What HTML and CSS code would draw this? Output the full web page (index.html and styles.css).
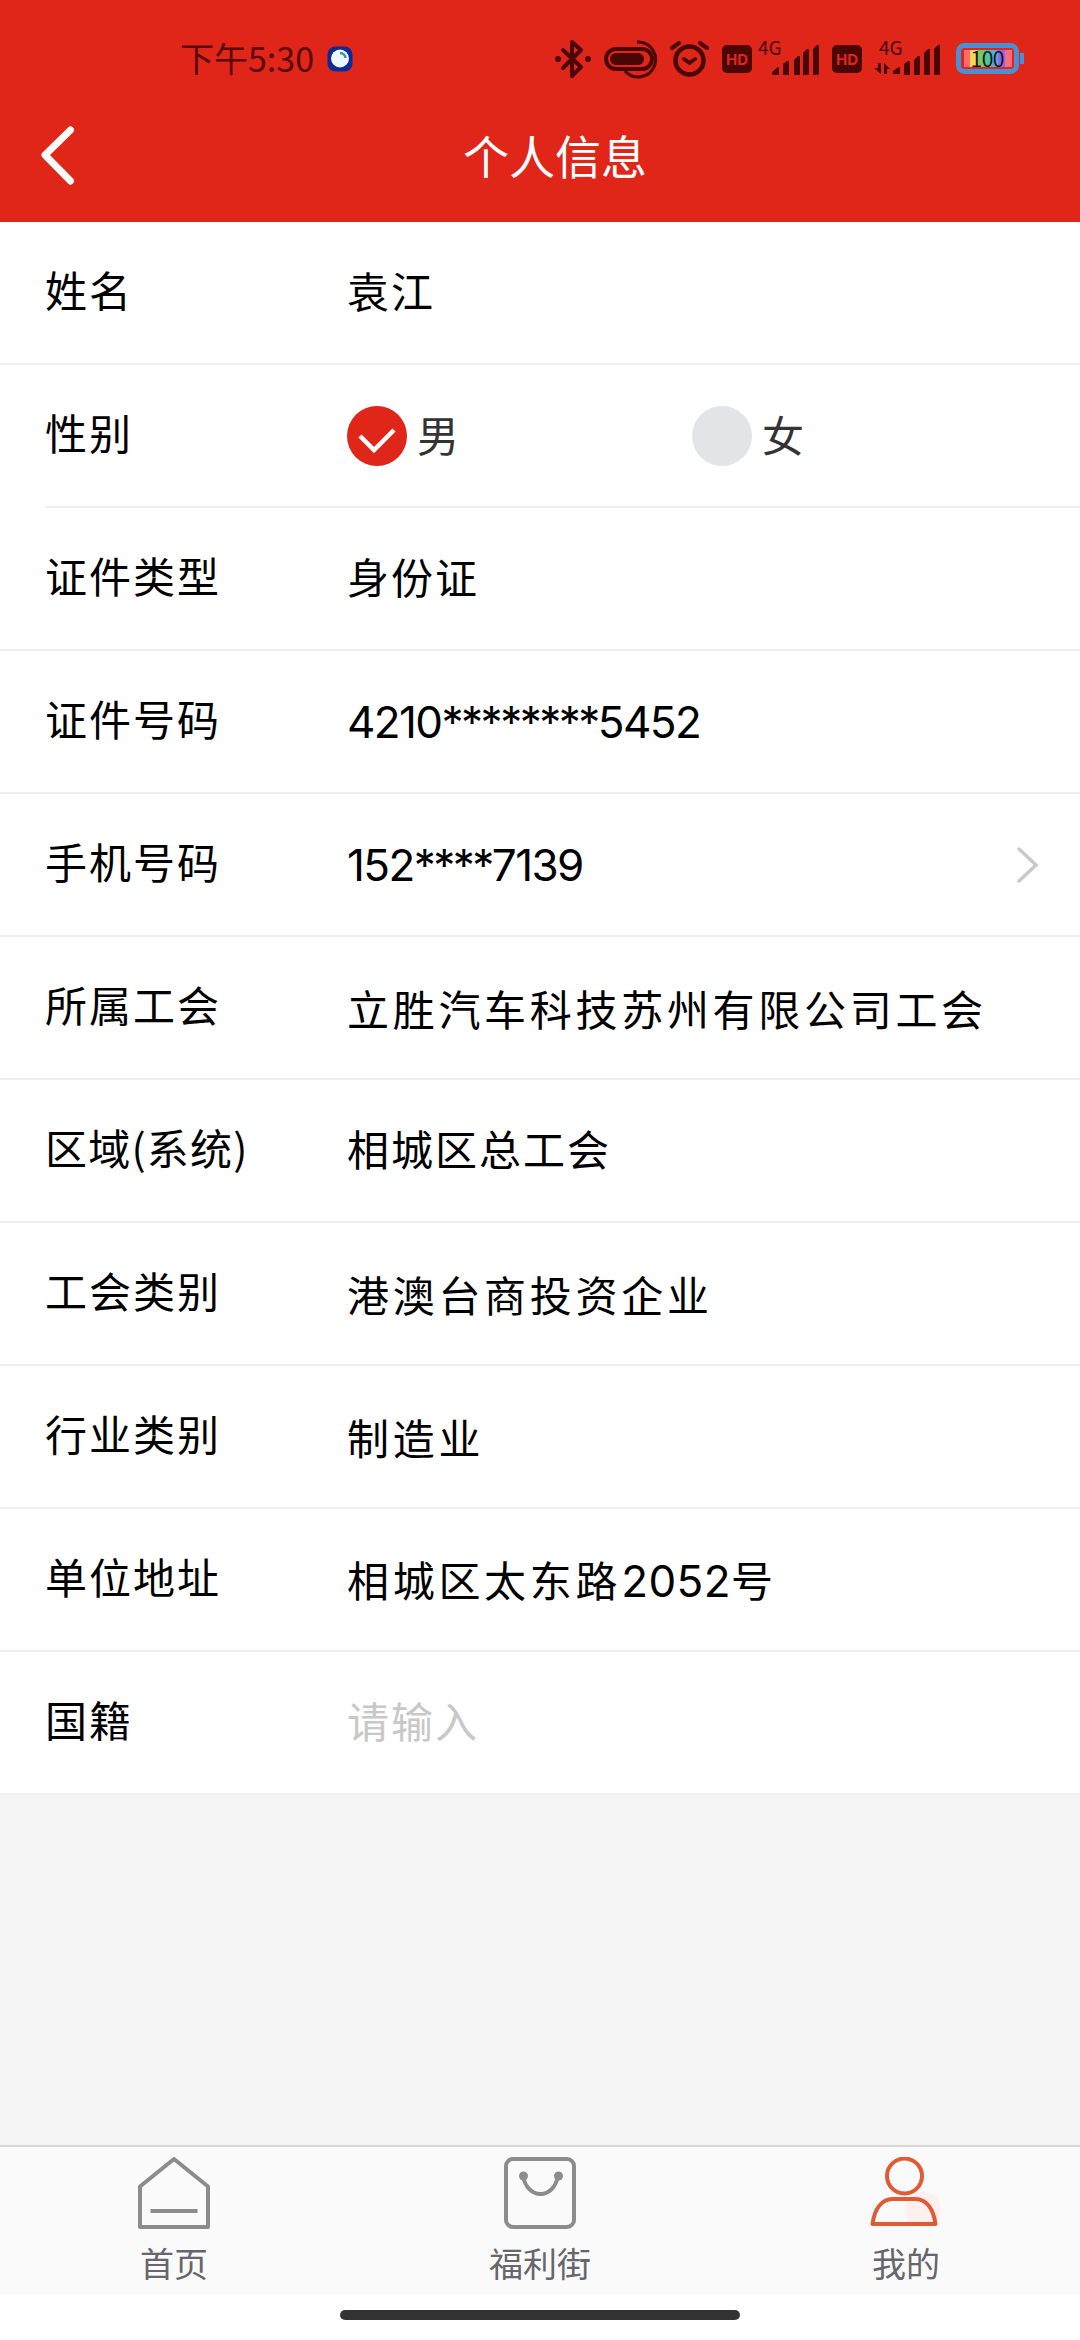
FILE: index.html
```html
<!DOCTYPE html>
<html lang="zh-CN">
  <head>
    <meta charset="UTF-8" />
    <meta name="viewport" content="width=device-width, initial-scale=1.0" />
    <title>个人信息</title>
    <link rel="stylesheet" href="styles.css">
  </head>
  <body>
    <header class="header">
      <div class="status-bar">
        <span class="time">下午5:30</span>
        <svg class="app-dot" width="26" height="26" viewBox="0 0 26 26">
          <rect x="0.5" y="0.5" width="25" height="25" rx="8" fill="#0d2a96" />
          <circle cx="13" cy="12.5" r="9" fill="#eef5fb" />
          <path d="M13 7a5.500 5.500 0 0 1 5.500 5" fill="none" stroke="#3d8fae" stroke-width="2.500" />
        </svg>
        <!-- bluetooth, vibrate, alarm, signal -->
        <svg class="status-icons" width="390" height="60" viewBox="550 29 390 60">
          <g fill="none" stroke="#4a0505" stroke-width="4" stroke-linecap="round" stroke-linejoin="round">
            <path d="M562 50l18 17-9 9V42l9 8-18 18" />
            <rect x="605" y="49" width="46" height="20" rx="10" stroke-width="4" />
            <path d="M636 42a17.500 17.500 0 1 1-12 29" stroke-width="3" stroke-linecap="butt" />
            <circle cx="688.500" cy="60.500" r="14" stroke-width="4.500" />
            <path d="M683 59l5.500 4 5.500-4" />
            <path d="M671 48l7-5M706 48l-7-5" />
          </g>
          <g fill="#4a0505">
            <circle cx="557" cy="59" r="3" />
            <circle cx="587" cy="59" r="3" />
            <rect x="609" y="53" width="34" height="12" rx="6" />
            <rect x="721" y="45" width="30" height="28" rx="5" />
            <rect x="831" y="45" width="30" height="28" rx="5" />
            <path d="M771 75v-3l6-5h1v8zM782 75V64l4-3h2v14zM793 75V60l4-4h2v19zM802 75V53l4-4h2v26zM812 75V49l4-4h2v30z" />
            <path d="M892 74v-3l6-4h1v7zM903 75V64l4-3h2v14zM913 75V60l4-4h2v19zM923 75V53l4-4h2v26zM933 75V49l4-4h2v30z" />
            <path d="M877 63h3v11l-7-6h4zM883 74V63l6 6h-3v5z" />
          </g>
          <g font-family="Inter, sans-serif" font-weight="700" font-size="15" fill="#e02619" text-anchor="middle">
            <text x="736" y="65">HD</text>
            <text x="846" y="65">HD</text>
          </g>
          <g font-family="Noto Sans CJK SC, sans-serif" font-size="19" fill="#4a0505">
            <text x="757" y="55">4G</text>
            <text x="878" y="55">4G</text>
          </g>
        </svg>
        <svg class="battery" width="70" height="32" viewBox="0 0 70 32">
          <rect x="8" y="7" width="7" height="17" fill="#ff6b66" />
          <rect x="14" y="7" width="7" height="17" fill="#ffd55c" />
          <rect x="21" y="7" width="7" height="17" fill="#79ca5c" />
          <rect x="28" y="7" width="7" height="17" fill="#49c8a0" />
          <rect x="35" y="7" width="7" height="17" fill="#4daee0" />
          <rect x="42" y="7" width="7" height="17" fill="#8d68ee" />
          <rect x="49" y="7" width="7" height="17" fill="#ff6b76" />
          <rect x="2.500" y="2.500" width="58" height="26" rx="6" fill="none" stroke="#4b90d6" stroke-width="5" />
          <rect x="64" y="10" width="4" height="11" fill="#4b90d6" />
          <text x="31.500" y="23.500" text-anchor="middle" font-family="Noto Sans CJK SC, sans-serif" font-size="21" fill="#1a1414" textLength="34">100</text>
        </svg>
      </div>
      <div class="nav-bar">
        <svg class="back" width="40" height="64" viewBox="0 0 40 64">
          <path d="M32.500 6L7 31l25.500 26" fill="none" stroke="#fff" stroke-width="7" stroke-linecap="round" stroke-linejoin="round" />
        </svg>
        <h1>个人信息</h1>
      </div>
    </header>

    <main class="form">
      <div class="row">
        <div class="label">姓名</div>
        <div class="value">袁江</div>
      </div>
      <div class="row inset">
        <div class="label">性别</div>
        <div class="radios">
          <div class="radio">
            <svg width="60" height="60" viewBox="0 0 60 60">
              <circle cx="30" cy="30" r="30" fill="#e02619" />
              <path d="M13 30l14 14 20-20" fill="none" stroke="#fff" stroke-width="4.500" />
            </svg>
            <span>男</span>
          </div>
          <div class="radio">
            <svg width="60" height="60" viewBox="0 0 60 60">
              <circle cx="30" cy="30" r="30" fill="#e3e4e5" />
            </svg>
            <span>女</span>
          </div>
        </div>
      </div>
      <div class="row">
        <div class="label">证件类型</div>
        <div class="value">身份证</div>
      </div>
      <div class="row">
        <div class="label">证件号码</div>
        <div class="value num">4210<span class="stars">********</span>5452</div>
      </div>
      <div class="row">
        <div class="label">手机号码</div>
        <div class="value num">152<span class="stars">****</span>7139</div>
        <svg class="arrow" width="24" height="38" viewBox="0 0 24 38">
          <path d="M3 3l17 16L3 35" fill="none" stroke="#c9c9c9" stroke-width="3.500" stroke-linecap="round" />
        </svg>
      </div>
      <div class="row">
        <div class="label">所属工会</div>
        <div class="value long">立胜汽车科技苏州有限公司工会</div>
      </div>
      <div class="row">
        <div class="label tight">区域(系统)</div>
        <div class="value">相城区总工会</div>
      </div>
      <div class="row">
        <div class="label">工会类别</div>
        <div class="value long">港澳台商投资企业</div>
      </div>
      <div class="row">
        <div class="label">行业类别</div>
        <div class="value long">制造业</div>
      </div>
      <div class="row">
        <div class="label">单位地址</div>
        <div class="value long">相城区太东路<span class="house-no">2052</span>号</div>
      </div>
      <div class="row">
        <div class="label">国籍</div>
        <div class="value placeholder">请输入</div>
      </div>
    </main>

    <nav class="tab-bar">
      <a class="tab">
        <svg width="72" height="72" viewBox="0 0 72 72" fill="none" stroke="#8c8c8c" stroke-width="4">
          <path d="M2 29.500L36 2l34 27.500V70H2z" stroke-linejoin="round" />
          <path d="M12.500 54h47" />
        </svg>
        <span>首页</span>
      </a>
      <a class="tab">
        <svg width="72" height="72" viewBox="0 0 72 72" fill="none" stroke="#8c8c8c" stroke-width="4">
          <rect x="2" y="2" width="68" height="68" rx="7" />
          <path d="M19 19c2 11 9 18 17.500 18S52 30 54 19" />
          <circle cx="19.500" cy="19" r="4.500" fill="#8c8c8c" stroke="none" />
          <circle cx="54.500" cy="19" r="4.500" fill="#8c8c8c" stroke="none" />
        </svg>
        <span>福利街</span>
      </a>
      <a class="tab">
        <svg width="72" height="72" viewBox="0 0 72 72" fill="none" stroke="#e05a35" stroke-width="4">
          <circle cx="53" cy="53" r="18" fill="#fff0ef" stroke="none" />
          <circle cx="34.500" cy="19" r="17.500" />
          <path d="M2.500 67c2-15 9-25 20-25h23c11 0 18 10 20 25z" stroke-linejoin="round" />
        </svg>
        <span>我的</span>
      </a>
    </nav>
    <div class="home-area">
      <div class="home-indicator"></div>
    </div>
  </body>
</html>
```

FILE: styles.css
```css
* {
  box-sizing: border-box;
}

body {
  margin: 0;
  width: 1080px;
  height: 2340px;
  display: flex;
  flex-direction: column;
  background-color: #f5f5f5;
  font-family: "Noto Sans CJK SC", sans-serif;
  color: #000;
  overflow: hidden;
}

.header {
  height: 222px;
  background-color: #e02619;
}

.status-bar {
  height: 92px;
  padding: 26px 0 0 180px;
  display: flex;
  align-items: center;
}

.time {
  width: 136px;
  padding-bottom: 2px;
  font-size: 34px;
  line-height: 62px;
  color: #5a0808;
  white-space: nowrap;
}

.app-dot {
  margin-left: 11px;
}

.status-icons {
  margin-left: 198px;
}

.battery {
  margin-left: 15px;
}

.nav-bar {
  height: 130px;
  display: flex;
  align-items: center;
  padding-left: 38px;
}

.back {
  margin-bottom: 3px;
}

.nav-bar h1 {
  margin: 0 0 0 385px;
  padding-bottom: 6px;
  font-size: 46px;
  font-weight: 400;
  line-height: 124px;
  color: #fff;
}

.form {
  background-color: #fff;
}

.row {
  height: 143px;
  padding: 0 40px 2px 45px;
  display: flex;
  align-items: center;
  background: linear-gradient(#efefef, #efefef) left bottom / 100% 2px no-repeat;
}

.row.inset {
  background-position: 45px bottom;
}

.label {
  width: 302px;
  padding-bottom: 7px;
  font-size: 42px;
  letter-spacing: 2px;
  line-height: 60px;
  white-space: nowrap;
}

.label.tight {
  letter-spacing: 1.2px;
}

.value {
  flex: 1;
  padding-bottom: 6px;
  font-size: 42px;
  letter-spacing: 2px;
  line-height: 60px;
  white-space: nowrap;
}

.value.long {
  padding-bottom: 0;
  letter-spacing: 3.7px;
}

.value.num {
  padding-bottom: 0;
  font-family: Inter, sans-serif;
  font-size: 44px;
  letter-spacing: -1.6px;
}

.stars {
  letter-spacing: -2.5px;
}

.house-no {
  font-family: Inter, sans-serif;
  font-size: 44px;
  letter-spacing: 0.4px;
}

.placeholder {
  color: #c8c8c8;
}

.radios {
  display: flex;
}

.radio {
  width: 345px;
  display: flex;
  align-items: center;
  gap: 10px;
  font-size: 42px;
  line-height: 56px;
  color: #333;
}

.radio span {
  padding-bottom: 4px;
}

.tab-bar {
  height: 150px;
  margin-top: auto;
  padding: 10px 0 0;
  display: flex;
  justify-content: space-between;
  border-top: 2px solid #d6d6d6;
  background-color: #fafafa;
}

.tab {
  width: 348px;
  display: flex;
  flex-direction: column;
  align-items: center;
  font-size: 34px;
  line-height: 50px;
  color: #66666c;
}

.tab span {
  margin-top: 9px;
}

.home-area {
  height: 45px;
  padding-top: 15px;
  background-color: #fff;
}

.home-indicator {
  width: 400px;
  height: 10px;
  margin: 0 auto;
  border-radius: 5px;
  background-color: #333;
}
```
